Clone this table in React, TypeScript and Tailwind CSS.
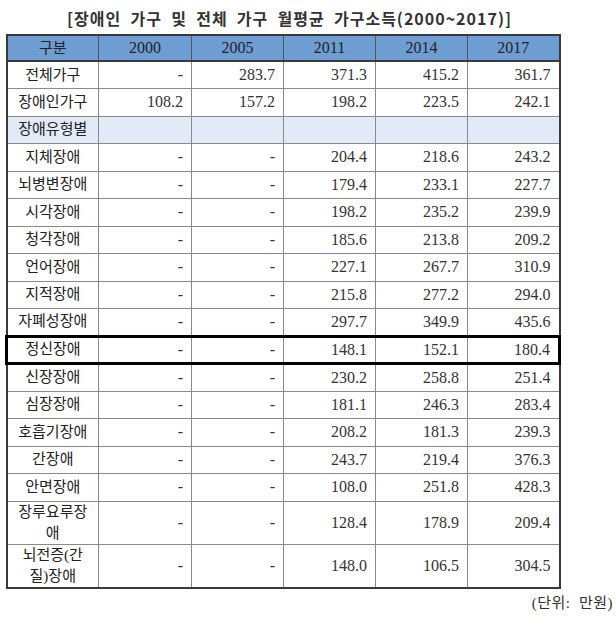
const rows: { label: React.ReactNode; v: string[]; kind?: 'group' | 'focus' | 'tall' }[] = [
  { label: '전체가구', v: ['-', '283.7', '371.3', '415.2', '361.7'] },
  { label: '장애인가구', v: ['108.2', '157.2', '198.2', '223.5', '242.1'] },
  { label: '장애유형별', v: ['', '', '', '', ''], kind: 'group' },
  { label: '지체장애', v: ['-', '-', '204.4', '218.6', '243.2'] },
  { label: '뇌병변장애', v: ['-', '-', '179.4', '233.1', '227.7'] },
  { label: '시각장애', v: ['-', '-', '198.2', '235.2', '239.9'] },
  { label: '청각장애', v: ['-', '-', '185.6', '213.8', '209.2'] },
  { label: '언어장애', v: ['-', '-', '227.1', '267.7', '310.9'] },
  { label: '지적장애', v: ['-', '-', '215.8', '277.2', '294.0'] },
  { label: '자폐성장애', v: ['-', '-', '297.7', '349.9', '435.6'] },
  { label: '정신장애', v: ['-', '-', '148.1', '152.1', '180.4'], kind: 'focus' },
  { label: '신장장애', v: ['-', '-', '230.2', '258.8', '251.4'] },
  { label: '심장장애', v: ['-', '-', '181.1', '246.3', '283.4'] },
  { label: '호흡기장애', v: ['-', '-', '208.2', '181.3', '239.3'] },
  { label: '간장애', v: ['-', '-', '243.7', '219.4', '376.3'] },
  { label: '안면장애', v: ['-', '-', '108.0', '251.8', '428.3'] },
  { label: <>장루요루장<br />애</>, v: ['-', '-', '128.4', '178.9', '209.4'], kind: 'tall' },
  { label: <>뇌전증(간<br />질)장애</>, v: ['-', '-', '148.0', '106.5', '304.5'], kind: 'tall' },
];

const years = ['2000', '2005', '2011', '2014', '2017'];

export default function App() {
  return (
    <div className="w-[616px] h-[620px] bg-white text-[#222] font-['Liberation_Serif','Noto_Sans_CJK_KR',serif]">
      <h1 className="h-[34px] pl-[21px] w-[558px] flex items-center justify-center pt-[1px] text-[16px] font-bold tracking-[1px] text-[#333] font-['Noto_Sans_CJK_KR',sans-serif]">
        [장애인&nbsp; 가구&nbsp; 및&nbsp; 전체&nbsp; 가구&nbsp; 월평균&nbsp; 가구소득(2000~2017)]
      </h1>

      <table className="ml-[5px] w-[553px] table-fixed border-collapse border-2 border-[#3a3a3a] text-[16px]">
        <colgroup>
          <col className="w-[92px]" />
          <col className="w-[93px]" />
          <col className="w-[92px]" />
          <col className="w-[92px]" />
          <col className="w-[92px]" />
          <col className="w-[92px]" />
        </colgroup>
        <thead>
          <tr className="h-[26px] bg-[#6e9dd3]">
            <th className="border border-[#555] border-b-2 border-b-[#3a3a3a] font-normal text-[15px] p-0">구분</th>
            {years.map((y) => (
              <th key={y} className="border border-[#555] border-b-2 border-b-[#3a3a3a] font-normal p-0">
                {y}
              </th>
            ))}
          </tr>
        </thead>
        <tbody>
          {rows.map((r, i) => {
            const focus = r.kind === 'focus';
            const cell = focus
              ? 'border border-[#8a8a8a] border-y-[3px] border-y-black'
              : 'border border-[#8a8a8a]';
            return (
              <tr
                key={i}
                className={
                  r.kind === 'tall'
                    ? 'h-[42px]'
                    : r.kind === 'group'
                      ? 'h-[27.5px] bg-[#e1eaf6]'
                      : 'h-[27.5px]'
                }
              >
                <td
                  className={`${cell} ${focus ? 'border-l-[3px] border-l-black' : ''} text-center text-[15px] leading-[21px] p-0`}
                >
                  {r.label}
                </td>
                {r.v.map((v, j) => (
                  <td
                    key={j}
                    className={`${cell} ${focus && j === 4 ? 'border-r-[3px] border-r-black' : ''} text-right pr-[8px] py-0 text-[#333]`}
                  >
                    {v}
                  </td>
                ))}
              </tr>
            );
          })}
        </tbody>
      </table>

      <div className="flex justify-end pr-[3px] pt-[4px] text-[15px] leading-[20px] tracking-[0.5px] text-[#333]">(단위:&nbsp; 만원)</div>
    </div>
  );
}
